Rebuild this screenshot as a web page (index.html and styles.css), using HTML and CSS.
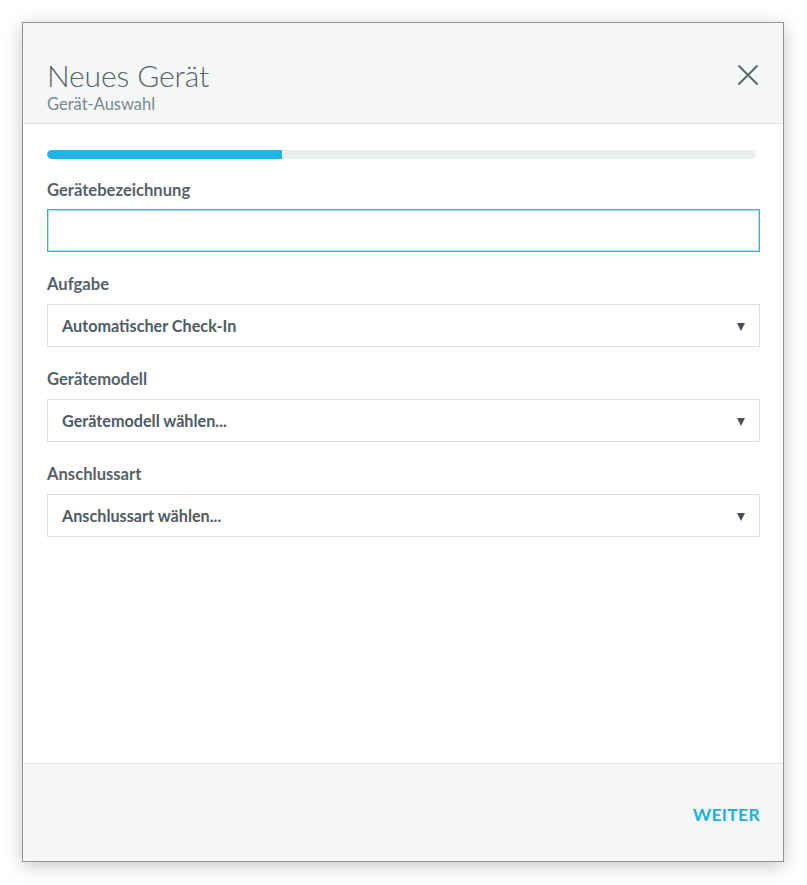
FILE: index.html
```html
<!DOCTYPE html>
<html lang="de">
<head>
<meta charset="utf-8">
<title>Neues Gerät</title>
<link rel="stylesheet" href="styles.css">
</head>
<body>
<div class="stage">
  <div class="dialog">
    <header class="dlg-header">
      <div class="titles">
        <h1 class="title">Neues Gerät</h1>
        <div class="subtitle">Gerät-Auswahl</div>
      </div>
      <button class="close" aria-label="Schließen">
        <svg width="22" height="22" viewBox="0 0 22 22"><path d="M1.5 1.5 L20.5 20.5 M20.5 1.5 L1.5 20.5" stroke="#56626c" stroke-width="1.8" fill="none"/></svg>
      </button>
    </header>
    <main class="dlg-body">
      <div class="progress"><div class="progress-fill" style="width:33.2%"></div></div>
      <div class="field first">
        <label class="label">Gerätebezeichnung</label>
        <div class="input focused"></div>
      </div>
      <div class="field">
        <label class="label">Aufgabe</label>
        <div class="select"><span>Automatischer Check-In</span><span class="arrow"></span></div>
      </div>
      <div class="field">
        <label class="label">Gerätemodell</label>
        <div class="select"><span>Gerätemodell wählen...</span><span class="arrow"></span></div>
      </div>
      <div class="field">
        <label class="label">Anschlussart</label>
        <div class="select"><span>Anschlussart wählen...</span><span class="arrow"></span></div>
      </div>
    </main>
    <footer class="dlg-footer">
      <button class="next">WEITER</button>
    </footer>
  </div>
</div>
</body>
</html>
```

FILE: styles.css
```css
* { box-sizing: border-box; }
html, body { margin: 0; padding: 0; background: #ffffff; }
body { font-family: Lato, "Open Sans", sans-serif; color: #4f5b66; }
.stage { padding: 22px 0 0 22px; width: 807px; height: 885px; }
.dialog {
  width: 762px; height: 840px;
  border: 1px solid #8f9296;
  background: #ffffff;
  display: flex; flex-direction: column;
  box-shadow: 0 4px 18px rgba(0,0,0,0.22);
}
.dlg-header {
  height: 101px;
  background: #f5f7f6;
  border-bottom: 1px solid #dde3e5;
  display: flex; justify-content: space-between; align-items: flex-start;
  padding: 0 24px 0 24px;
}
.title {
  margin: 0; padding-top: 34px;
  font-weight: 300; font-size: 30px; line-height: 37px;
  color: #56626c; letter-spacing: -0.1px;
}
.subtitle { font-size: 16.5px; line-height: 20px; color: #7b8790; margin-top: 0; }
.close {
  border: 0; background: transparent; padding: 0; margin-top: 41px;
  width: 22px; height: 22px; cursor: pointer;
}
.close svg { display: block; }
.dlg-body { flex: 1; padding: 26px 23px 0 24px; }
.progress { height: 9px; background: #eceff0; border-radius: 5px; margin-right: 4px; overflow: hidden; }
.progress-fill { height: 100%; background: #1fb6e4; border-radius: 5px 0 0 5px; }
.field { margin-top: 21px; }
.field.first { margin-top: 20px; }
.label { display: block; font-size: 16.6px; font-weight: 700; line-height: 22px; color: #56616b; margin-bottom: 9px; }
.input { height: 43px; border: 1px solid #d8e0e2; background: #fff; }
.input.focused {
  margin-top: -1px;
  border: 1px solid #3aafdc;
  box-shadow: inset 0 0 0 1px rgba(80, 190, 230, 0.45);
}
.select {
  height: 43px; border: 1px solid #d8e0e2; background: #fff;
  display: flex; align-items: center; justify-content: space-between;
  padding: 0 14px 0 14px;
  font-size: 16.2px; font-weight: 700; color: #4f5b66;
}
.arrow {
  width: 0; height: 0;
  border-left: 4.5px solid transparent; border-right: 4.5px solid transparent;
  border-top: 8px solid #4a4f55;
  margin-top: 2px;
}
.dlg-footer {
  height: 98px; background: #f5f7f6; border-top: 1px solid #dde3e5;
  display: flex; justify-content: flex-end; align-items: center;
  padding: 0 23px 0 0;
}
.next {
  border: 0; background: transparent; padding: 0; cursor: pointer;
  font-family: Lato, "Open Sans", sans-serif;
  font-weight: 700; font-size: 17.5px; color: #1fb0e2; letter-spacing: 0.3px;
  margin-top: 3px;
}
```
